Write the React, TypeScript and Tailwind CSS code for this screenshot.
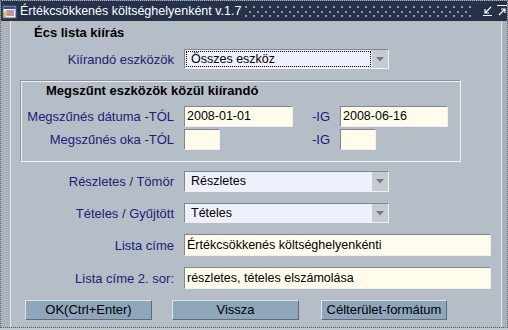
import React from "react";

const label = "text-[13px] leading-[15px] text-[#1c2078] text-right whitespace-nowrap";
const sunken =
  "border border-t-[#7d8791] border-l-[#7d8791] border-b-[#eef1f4] border-r-[#eef1f4]";

function TitleIcon() {
  return (
    <svg width="15" height="15" viewBox="0 0 15 15" className="shrink-0">
      <rect x="1" y="2" width="13" height="12" fill="#f4f4f4" stroke="#5a6070" />
      <rect x="1.5" y="2.5" width="12" height="2.5" fill="#2a4fb0" />
      <rect x="5" y="6.5" width="7" height="1" fill="#c02020" />
      <rect x="5" y="8.5" width="7" height="1" fill="#2a4fb0" />
      <rect x="5" y="10.5" width="7" height="1" fill="#c02020" />
      <path d="M1 0 L4 3 L2 3 Z" fill="#2aa070" />
      <path d="M4 7 L1 11 L3 11 L1.5 14.5 L5.5 9.5 L3.5 9.5 L5 7 Z" fill="#f4d020" stroke="#a08010" strokeWidth="0.4" />
    </svg>
  );
}

// grip texture of the title bar: three staggered rows of tiny dots
function Dots() {
  const row = "h-[2px] bg-[repeating-linear-gradient(90deg,#8f9cac_0px,#8f9cac_2px,transparent_2px,transparent_8px)]";
  return (
    <div className="w-[230px] h-[16px] flex flex-col shrink-0">
      <div className={`mt-[3px] w-[228px] ${row}`} />
      <div className={`mt-[3px] ml-[4px] w-[224px] ${row}`} />
      <div className={`mt-[2px] w-[228px] ${row}`} />
    </div>
  );
}

function WinButtons() {
  return (
    <div className="flex items-center gap-[4px] shrink-0">
      <svg width="10" height="10" viewBox="0 0 10 10">
        <path d="M8 1 L2 7 M2 3 L2 7 L6 7 M0 9.5 L9 9.5" stroke="#ffffff" strokeWidth="1.2" fill="none" />
      </svg>
      <svg width="10" height="12" viewBox="0 0 10 12">
        <path d="M0 0.5 L10 0.5 M2 10 L8 4 M4 4 L8 4 L8 8" stroke="#ffffff" strokeWidth="1.2" fill="none" />
      </svg>
    </div>
  );
}

function Select({ value, focus, w }: { value: string; focus?: boolean; w: string }) {
  return (
    <div className={`${w} h-full flex bg-[#eef0fb] ${sunken}`}>
      <div className="flex-1 p-[1px] flex">
        <div
          className={`flex-1 flex items-center pl-[4px] text-[12.5px] text-black ${
            focus ? "border border-dotted border-black" : "border border-transparent"
          }`}
        >
          {value}
        </div>
      </div>
      <div className="w-[16px] bg-[#c6cbd0] flex items-center justify-center">
        <svg width="8" height="5" viewBox="0 0 8 5">
          <path d="M0 0 L8 0 L4 4.5 Z" fill="#6f7a86" />
        </svg>
      </div>
    </div>
  );
}

function Field({ value, w }: { value?: string; w: string }) {
  return (
    <div className={`${w} h-full flex items-center pl-[2px] bg-[#fffcec] text-[12.5px] text-black ${sunken}`}>
      {value}
    </div>
  );
}

function Btn({ text, w }: { text: string; w: string }) {
  return (
    <div
      className={`${w} h-[20px] flex items-center justify-center bg-[#8fa7ba] text-[13px] text-black border border-t-[#dde4ea] border-l-[#dde4ea] border-b-[#5d6c78] border-r-[#5d6c78]`}
    >
      {text}
    </div>
  );
}

export default function App() {
  return (
    <div className="w-[508px] h-[330px] bg-[#c4c8cc] font-['Liberation_Sans',Arial,sans-serif]">
      <div className="w-[508px] h-[328px] flex flex-col border border-dotted border-[#5c636b] bg-[#aab3bc]">
        {/* title bar */}
        <div className="h-[20px] flex items-center bg-[#26324a] pl-[1px] overflow-hidden">
          <TitleIcon />
          <span className="ml-[3px] w-[222px] shrink-0 text-[12.5px] text-white whitespace-nowrap">
            Értékcsökkenés költséghelyenként v.1.7
          </span>
          <div className="ml-[3px]">
            <Dots />
          </div>
          <div className="flex-1" />
          <WinButtons />
        </div>

        <div className="flex-1 flex">
          <div className="w-[9px]" />
          <div className="w-[492px] flex flex-col bg-[#b5bec7] border-l border-r border-[#e2e6ea]">
            <div className="mt-[4px] h-[15px] pl-[23px] text-[13px] leading-[15px] font-bold text-black">
              Écs lista kiírás
            </div>

            <div className="mt-[9px] h-[20px] flex items-center">
              <div className={`w-[163px] ${label}`}>Kiírandó eszközök</div>
              <div className="ml-[10px] h-full">
                <Select value="Összes eszköz" focus w="w-[205px]" />
              </div>
            </div>

            <div className="mt-[11px] ml-[9px] w-[441px] h-[82px] flex flex-col border border-t-[#8a949e] border-l-[#8a949e] border-b-[#f0f3f6] border-r-[#f0f3f6] shadow-[inset_1px_1px_0_#f0f3f6]">
              <div className="mt-[3px] h-[14px] pl-[25px] text-[13px] leading-[14px] font-bold text-black whitespace-nowrap">
                Megszűnt eszközök közül kiírandó
              </div>
              <div className="mt-[8px] h-[21px] grid grid-cols-[153px_10px_109px_47px_108px] items-center">
                <div className={label}>Megszűnés dátuma -TÓL</div>
                <div />
                <Field value="2008-01-01" w="w-[109px]" />
                <div className={`${label} pr-[10px]`}>-IG</div>
                <Field value="2008-06-16" w="w-[108px]" />
              </div>
              <div className="mt-[2px] h-[21px] grid grid-cols-[153px_10px_109px_47px_108px] items-center">
                <div className={label}>Megszűnés oka -TÓL</div>
                <div />
                <Field w="w-[36px]" />
                <div className={`${label} pr-[10px]`}>-IG</div>
                <Field w="w-[36px]" />
              </div>
            </div>

            <div className="mt-[9px] h-[21px] flex items-center">
              <div className={`w-[163px] ${label}`}>Részletes / Tömör</div>
              <div className="ml-[10px] h-full">
                <Select value="Részletes" w="w-[205px]" />
              </div>
            </div>

            <div className="mt-[11px] h-[20px] flex items-center">
              <div className={`w-[163px] ${label}`}>Tételes / Gyűjtött</div>
              <div className="ml-[10px] h-full">
                <Select value="Tételes" w="w-[205px]" />
              </div>
            </div>

            <div className="mt-[11px] h-[22px] flex items-center">
              <div className={`w-[163px] ${label}`}>Lista címe</div>
              <div className="ml-[10px] h-full">
                <Field value="Értékcsökkenés költséghelyenkénti" w="w-[307px]" />
              </div>
            </div>

            <div className="mt-[11px] h-[22px] flex items-center">
              <div className={`w-[163px] ${label}`}>Lista címe 2. sor:</div>
              <div className="ml-[10px] h-full">
                <Field value="részletes, tételes elszámolása" w="w-[307px]" />
              </div>
            </div>

            <div className="mt-[11px] pl-[14px] flex">
              <Btn text="OK(Ctrl+Enter)" w="w-[127px]" />
              <div className="ml-[20px]">
                <Btn text="Vissza" w="w-[127px]" />
              </div>
              <div className="ml-[22px]">
                <Btn text="Célterület-formátum" w="w-[126px]" />
              </div>
            </div>
          </div>
          <div className="flex-1" />
        </div>
      </div>
    </div>
  );
}
